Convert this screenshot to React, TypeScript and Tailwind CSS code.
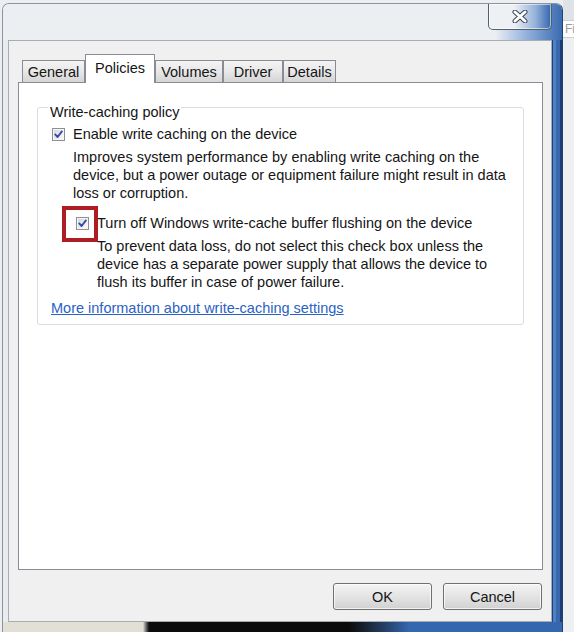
import React from "react";

function CheckBox() {
  return (
    <span className="flex h-[13px] w-[13px] shrink-0 items-center justify-center border border-[#8e8f8f] bg-linear-to-br from-[#cfd4db] to-white shadow-[inset_0_0_0_1px_#f6f6f6]">
      <svg width="11" height="11" viewBox="0 0 11 11">
        <path d="M2.2 5.4 L4.6 8 L8.9 2.4" fill="none" stroke="#3c49a6" strokeWidth="1.9" strokeLinecap="round" strokeLinejoin="round" />
      </svg>
    </span>
  );
}

const tabs = [
  { label: "General", cls: "w-[63px]", sel: false },
  { label: "Policies", cls: "w-[70px]", sel: true },
  { label: "Volumes", cls: "w-[68px]", sel: false },
  { label: "Driver", cls: "w-[60px]", sel: false },
  { label: "Details", cls: "w-[53px]", sel: false },
];

const btn =
  "h-[27px] w-[99px] rounded-[3px] border border-[#707070] bg-linear-to-b from-[#f3f3f3] via-[#e4e4e4] via-50% to-[#d1d1d1] shadow-[inset_0_0_0_1px_rgba(255,255,255,0.7)]";

export default function App() {
  return (
    <div className="flex h-[632px] w-[574px] overflow-hidden bg-[#eceef1] pl-[2px] text-[14.5px] leading-[18px] text-[#151515] font-['Liberation_Sans',Arial,sans-serif]">
      {/* window */}
      <div className="mt-[3px] flex h-[630px] w-[561px] shrink-0 flex-col overflow-hidden rounded-t-[7px] border border-[#8d949b] border-r-[#1f4377] bg-[#e9ecf0]">
        {/* title bar */}
        <div className="flex h-[36px] shrink-0 items-start justify-end bg-linear-to-r from-[#eceff2] from-88% via-[#9cb9de] via-93% to-[#3a6bb0] pr-[10px]">
          <div className="flex h-[26px] w-[64px] items-center justify-center rounded-b-[5px] border border-t-0 border-[#56606d] bg-linear-to-r from-[#eef1f4] from-40% via-[#93b2da] via-75% to-[#3466ad] shadow-[inset_0_0_0_1px_rgba(255,255,255,0.55)]">
            <svg width="16" height="13" viewBox="0 0 16 13" className="-mt-[1px]">
              <path d="M3 2 L13 11 M13 2 L3 11" stroke="#3d4753" strokeWidth="5" strokeLinecap="round" />
              <path d="M3 2 L13 11 M13 2 L3 11" stroke="#ffffff" strokeWidth="3" strokeLinecap="round" />
            </svg>
          </div>
        </div>

        {/* middle row */}
        <div className="flex h-[582px] shrink-0">
          <div className="w-[5px] shrink-0 bg-[#e9ecef]" />

          {/* client area */}
          <div className="flex w-[544px] shrink-0 flex-col border border-[#a6adb5] bg-[#f0f0f0] pl-[9px] pr-[8px] pt-[13px]">
            {/* tabs */}
            <div className="flex h-[28px] items-end pl-[4px]">
              {tabs.map((t) =>
                t.sel ? (
                  <div
                    key={t.label}
                    className={`relative z-10 -mb-[1px] flex h-[29px] items-center justify-center border border-b-0 border-[#898c95] bg-white pb-[2px] ${t.cls}`}
                  >
                    {t.label}
                  </div>
                ) : (
                  <div
                    key={t.label}
                    className={`flex h-[22px] items-center justify-center border border-b-0 border-[#898c95] bg-linear-to-b from-[#f4f4f4] via-[#e8e8e8] via-50% to-[#d4d4d4] ${t.cls}`}
                  >
                    {t.label}
                  </div>
                )
              )}
            </div>

            {/* tab panel */}
            <div className="h-[488px] w-[525px] shrink-0 border border-[#898c95] bg-white px-[18px] pt-[10px]">
              <fieldset className="rounded-[3px] border border-[#d5dfe5] pb-[7px]">
                <legend className="ml-[10px] px-[2px] pt-[10px] leading-[18px]">Write-caching policy</legend>

                <div className="mt-[4px] flex items-center gap-[8px] pl-[14px]">
                  <CheckBox />
                  <span>Enable write caching on the device</span>
                </div>
                <div className="mt-[5px] whitespace-nowrap pl-[35px]">
                  Improves system performance by enabling write caching on the
                  <br />
                  device, but a power outage or equipment failure might result in data
                  <br />
                  loss or corruption.
                </div>

                <div className="mt-[12px] flex items-center gap-[8px] pl-[38px]">
                  <span className="relative">
                    <CheckBox />
                    <span className="absolute left-[-14px] top-[-11px] h-[36px] w-[36px] border-[4px] border-[#ae1d22]" />
                  </span>
                  <span>Turn off Windows write-cache buffer flushing on the device</span>
                </div>
                <div className="mt-[5px] whitespace-nowrap pl-[59px]">
                  To prevent data loss, do not select this check box unless the
                  <br />
                  device has a separate power supply that allows the device to
                  <br />
                  flush its buffer in case of power failure.
                </div>

                <div className="mt-[8px] pl-[13px]">
                  <a href="#" className="text-[#2a62c4] underline">
                    More information about write-caching settings
                  </a>
                </div>
              </fieldset>
            </div>

            {/* buttons */}
            <div className="mt-[13px] flex justify-end gap-[11px] pr-[1px]">
              <button className={btn}>OK</button>
              <button className={btn}>Cancel</button>
            </div>
          </div>

          {/* right glass frame */}
          <div className="flex w-[10px] shrink-0">
            <div className="w-[1px] bg-[#1f4177]" />
            <div className="w-[3px] bg-[#4e80c3]" />
            <div className="w-[4px] bg-[#3867ad]" />
            <div className="w-[2px] bg-[#1c3f73]" />
          </div>
        </div>

        {/* bottom frame */}
        <div className="flex h-[10px] shrink-0">
          <div className="w-[140px] bg-[#e2dfd7]" />
          <div className="w-[6px] bg-linear-to-r from-[#e2dfd7] to-[#121212]" />
          <div className="w-[200px] bg-[#0c0c0c]" />
          <div className="w-[60px] bg-linear-to-r from-[#0c0c0c] to-[#3467ad]" />
          <div className="flex-1 bg-[#3467ad]" />
        </div>
      </div>

      {/* background window behind */}
      <div className="flex flex-1 flex-col bg-[#eef0f2]">
        <div className="h-[20px] bg-[#dfe2e6]" />
        <div className="h-[18px] overflow-hidden border-y border-[#c9ced4] bg-white pl-[2px] text-[12px] leading-[16px] text-[#9a9a9a]">
          Fir
        </div>
      </div>
    </div>
  );
}
